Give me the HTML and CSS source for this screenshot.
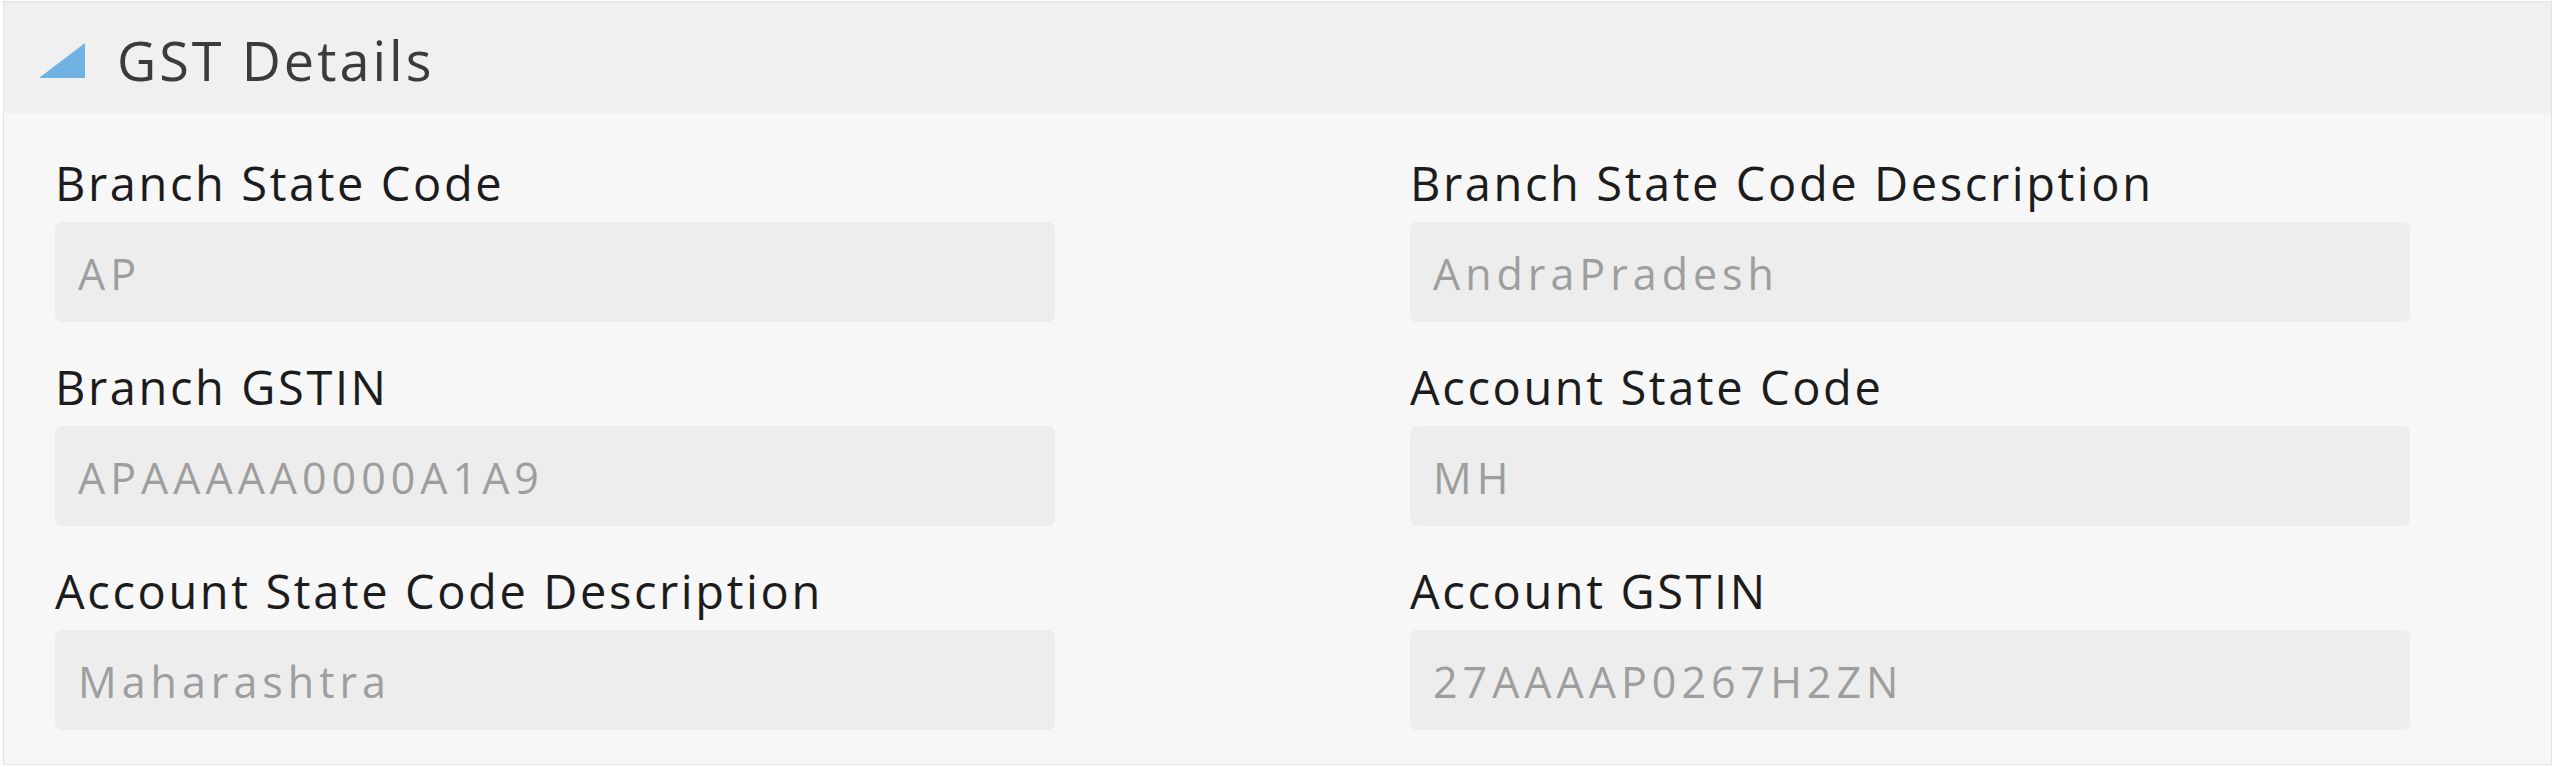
FILE: index.html
```html
<!DOCTYPE html>
<html lang="en">
<head>
<meta charset="utf-8">
<title>GST Details</title>
<link rel="stylesheet" href="styles.css">
</head>
<body>
<section class="panel">
  <header class="panel-header">
    <svg class="toggle" width="46" height="35" viewBox="0 0 46 35" aria-hidden="true">
      <polygon points="0,35 46,35 46,0" fill="#6fb2e3"/>
    </svg>
    <h2 class="title">GST Details</h2>
  </header>
  <div class="panel-body">
    <div class="field">
      <label class="label">Branch State Code</label>
      <div class="value">AP</div>
    </div>
    <div class="field">
      <label class="label">Branch State Code Description</label>
      <div class="value">AndraPradesh</div>
    </div>
    <div class="field">
      <label class="label">Branch GSTIN</label>
      <div class="value">APAAAAA0000A1A9</div>
    </div>
    <div class="field">
      <label class="label">Account State Code</label>
      <div class="value">MH</div>
    </div>
    <div class="field">
      <label class="label">Account State Code Description</label>
      <div class="value">Maharashtra</div>
    </div>
    <div class="field">
      <label class="label">Account GSTIN</label>
      <div class="value">27AAAAP0267H2ZN</div>
    </div>
  </div>
</section>
</body>
</html>
```

FILE: styles.css
```css
html, body {
  margin: 0;
  padding: 0;
  background: #ffffff;
}

body {
  font-family: "Open Sans", "Noto Sans", "Liberation Sans", sans-serif;
  padding: 1px 1px 0 3px;
}

.panel {
  border: 1px solid #e2e2e2;
  background: #f7f7f7;
}

.panel-header {
  height: 111px;
  box-sizing: border-box;
  background: #f0f0f0;
  display: flex;
  align-items: center;
  padding: 4px 0 0 35px;
}

.toggle {
  display: block;
  flex: none;
  margin-top: 1px;
}

.title {
  margin: 0 0 0 32px;
  font-size: 54px;
  font-weight: 400;
  line-height: 74px;
  letter-spacing: 3px;
  color: #3b3b3b;
}

.panel-body {
  display: grid;
  grid-template-columns: 1355px 1fr;
  row-gap: 33px;
  padding: 38px 0 34px 51px;
}

.field {
  display: flex;
  flex-direction: column;
}

.label {
  font-size: 47px;
  line-height: 64px;
  letter-spacing: 2.6px;
  color: #1c1c1c;
  margin-bottom: 7px;
}

.value {
  width: 1000px;
  height: 100px;
  box-sizing: border-box;
  background: #ededed;
  border-radius: 7px;
  display: flex;
  align-items: center;
  padding: 2px 0 0 23px;
  font-size: 43px;
  letter-spacing: 5px;
  color: #9e9e9e;
}
```
